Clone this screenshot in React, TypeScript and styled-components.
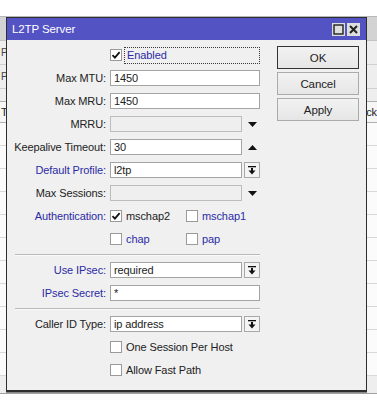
import React from 'react';
import styled, { createGlobalStyle } from 'styled-components';

const GlobalStyle = createGlobalStyle`
  html, body {
    margin: 0;
    padding: 0;
    background: #ffffff;
  }
  body {
    font-family: "Liberation Sans", Arial, sans-serif;
    font-size: 11px;
    letter-spacing: -0.1px;
    color: #222;
  }
`;

const Page = styled.div`
  position: relative;
  width: 377px;
  height: 403px;
  overflow: hidden;
  background: #fff;
  display: flex;
  flex-direction: column;
`;

const TopGap = styled.div`
  height: 16px;
  flex-shrink: 0;
`;

// window behind the dialog, only its edges are visible
const BackWindow = styled.div`
  height: 376px;
  flex-shrink: 0;
  background: #eeeeee;
  border-top: 1px solid #b8b8b8;
  border-bottom: 1px solid #a0a0a0;
  display: flex;
  flex-direction: column;
  overflow: hidden;
`;

const BackTitle = styled.div`
  height: 23px;
  background: #d3d3d3;
  border-bottom: 1px solid #c4c4c4;
`;

const BackToolbar = styled.div`
  height: 23px;
  border-bottom: 1px solid #cfcfcf;
  display: flex;
  align-items: center;
  justify-content: space-between;
  padding: 0 0 0 1px;
  color: #444;
  font-size: 10px;
`;

const BackSpacer = styled.div`
  height: 12px;
`;

const BackHeader = styled.div`
  height: 20px;
  background: #f6f6f6;
  border-top: 1px solid #b0b0b0;
  border-bottom: 1px solid #b0b0b0;
  display: flex;
  align-items: center;
  justify-content: space-between;
  padding: 0 0 0 1px;
  color: #222;
`;

const BackRow = styled.div`
  height: 22px;
  border-bottom: 1px solid #d8d8d8;
  background: #fbfbfb;
`;

const Dialog = styled.div`
  position: absolute;
  left: 6px;
  top: 17px;
  width: 359px;
  height: 372px;
  border: 1px solid #2e2e2e;
  border-bottom-width: 2px;
  background: #f0f0f0;
  display: flex;
  flex-direction: column;
  box-shadow: 0 1px 0 #8a8a8a;
`;

const TitleBar = styled.div`
  height: 22px;
  background: #5353c4;
  color: #fff;
  display: flex;
  align-items: center;
  padding: 0 6px 0 5px;
  font-size: 11.5px;
`;

const TitleText = styled.div`
  flex: 1;
`;

const TitleButton = styled.div`
  width: 13px;
  height: 13px;
  background: #dedede;
  margin-left: 2px;
  display: flex;
  align-items: center;
  justify-content: center;
`;

const Body = styled.div`
  display: flex;
  align-items: flex-start;
`;

const Form = styled.div`
  width: 253px;
  padding: 7px 0 0 1px;
  display: flex;
  flex-direction: column;
  gap: 7px;
`;

const Row = styled.div`
  display: grid;
  grid-template-columns: 98px 150px;
  column-gap: 4px;
  height: 16px;
  align-items: center;
`;

const Label = styled.div<{ $blue?: boolean }>`
  text-align: right;
  white-space: nowrap;
  color: ${p => (p.$blue ? '#2b2ba6' : '#222')};
`;

const Field = styled.div`
  display: flex;
  align-items: center;
  height: 16px;
`;

const Input = styled.div<{ $disabled?: boolean; $short?: boolean }>`
  box-sizing: border-box;
  width: ${p => (p.$short ? '132px' : '150px')};
  height: 16px;
  border: 1px solid ${p => (p.$disabled ? '#bdbdbd' : '#a4a4a4')};
  background: ${p => (p.$disabled ? '#efefef' : '#fff')};
  padding-left: 3px;
  line-height: 14px;
  white-space: nowrap;
`;

const ArrowSlot = styled.div`
  width: 16px;
  height: 16px;
  margin-left: 2px;
  display: flex;
  align-items: center;
  justify-content: center;
`;

const DropButton = styled.div`
  box-sizing: border-box;
  width: 16px;
  height: 16px;
  margin-left: 2px;
  border: 1px solid #a8a8a8;
  background: #f4f4f4;
  display: flex;
  align-items: center;
  justify-content: center;
`;

const Checks = styled.div`
  display: grid;
  grid-template-columns: 76px 74px;
  align-items: center;
`;

const Check = styled.div`
  display: flex;
  align-items: center;
  gap: 4px;
  white-space: nowrap;
`;

const Box = styled.div`
  box-sizing: border-box;
  width: 12px;
  height: 12px;
  border: 1px solid #9a9a9a;
  background: #fff;
  display: flex;
  align-items: center;
  justify-content: center;
`;

const CheckText = styled.span<{ $blue?: boolean }>`
  color: ${p => (p.$blue ? '#2b2ba6' : '#222')};
`;

const Focus = styled.div`
  box-sizing: border-box;
  height: 17px;
  flex: 1;
  margin-left: -2px;
  padding-left: 2px;
  border: 1px dotted #3a3a3a;
  line-height: 15px;
  color: #2b2ba6;
`;

const Separator = styled.div`
  height: 1px;
  margin: 0 0 0 7px;
  width: 245px;
  background: #b9b9b9;
  box-shadow: 0 1px 0 #fafafa;
`;

const Buttons = styled.div`
  margin-left: 16px;
  padding-top: 6px;
  display: flex;
  flex-direction: column;
  gap: 3px;
`;

const Button = styled.div<{ $default?: boolean }>`
  box-sizing: border-box;
  width: 82px;
  height: 23px;
  border: 1px solid ${p => (p.$default ? '#333' : '#ababab')};
  background: linear-gradient(#f2f2f2, #e6e6e6);
  display: flex;
  align-items: center;
  justify-content: center;
  font-size: 11.5px;
  color: #222;
`;

const Tick = () => (
  <svg width="10" height="10" viewBox="0 0 10 10">
    <path d="M1.5 5.2l2.4 2.4L8.6 2.2" fill="none" stroke="#111" strokeWidth="1.8" />
  </svg>
);

const Down = () => (
  <svg width="9" height="5" viewBox="0 0 9 5">
    <path d="M0 0h9L4.5 5z" fill="#111" />
  </svg>
);

const Up = () => (
  <svg width="9" height="5" viewBox="0 0 9 5">
    <path d="M0 5h9L4.5 0z" fill="#111" />
  </svg>
);

const DropIcon = () => (
  <svg width="8" height="9" viewBox="0 0 8 9">
    <rect x="0" y="0" width="8" height="1.3" fill="#111" />
    <rect x="3" y="2" width="2" height="3" fill="#111" />
    <path d="M0.5 4.5h7L4 8.5z" fill="#111" />
  </svg>
);

const CheckItem: React.FC<{ label: string; checked?: boolean; blue?: boolean }> = ({ label, checked, blue }) => (
  <Check>
    <Box>{checked && <Tick />}</Box>
    <CheckText $blue={blue}>{label}</CheckText>
  </Check>
);

const TextRow: React.FC<{ label: string; value?: string; blue?: boolean; disabled?: boolean; tail?: 'down' | 'up' | 'drop' }> = ({
  label,
  value,
  blue,
  disabled,
  tail,
}) => (
  <Row>
    <Label $blue={blue}>{label}:</Label>
    <Field>
      <Input $disabled={disabled} $short={!!tail}>{value}</Input>
      {tail === 'down' && (
        <ArrowSlot>
          <Down />
        </ArrowSlot>
      )}
      {tail === 'up' && (
        <ArrowSlot>
          <Up />
        </ArrowSlot>
      )}
      {tail === 'drop' && (
        <DropButton>
          <DropIcon />
        </DropButton>
      )}
    </Field>
  </Row>
);

export default function App() {
  return (
    <Page>
      <GlobalStyle />
      <TopGap />
      <BackWindow>
        <BackTitle />
        <BackToolbar>
          <span>P</span>
          <span />
        </BackToolbar>
        <BackToolbar>
          <span>P</span>
          <span />
        </BackToolbar>
        <BackSpacer />
        <BackHeader>
          <span>Tx</span>
          <span>ck</span>
        </BackHeader>
        {Array.from({ length: 11 }).map((_, i) => (
          <BackRow key={i} />
        ))}
      </BackWindow>

      <Dialog>
        <TitleBar>
          <TitleText>L2TP Server</TitleText>
          <TitleButton>
            <svg width="11" height="11" viewBox="0 0 11 11">
              <rect x="1" y="1" width="9" height="9" fill="none" stroke="#222" strokeWidth="1.4" />
            </svg>
          </TitleButton>
          <TitleButton>
            <svg width="11" height="11" viewBox="0 0 11 11">
              <path d="M2 2l7 7M9 2l-7 7" stroke="#222" strokeWidth="2" />
            </svg>
          </TitleButton>
        </TitleBar>
        <Body>
          <Form>
            <Row>
              <span />
              <Field>
                <Box>
                  <Tick />
                </Box>
                <span style={{ width: 4 }} />
                <Focus>Enabled</Focus>
              </Field>
            </Row>
            <TextRow label="Max MTU" value="1450" />
            <TextRow label="Max MRU" value="1450" />
            <TextRow label="MRRU" disabled tail="down" />
            <TextRow label="Keepalive Timeout" value="30" tail="up" />
            <TextRow label="Default Profile" value="l2tp" blue tail="drop" />
            <TextRow label="Max Sessions" disabled tail="down" />
            <Row>
              <Label $blue>Authentication:</Label>
              <Checks>
                <CheckItem label="mschap2" checked />
                <CheckItem label="mschap1" blue />
              </Checks>
            </Row>
            <Row>
              <span />
              <Checks>
                <CheckItem label="chap" blue />
                <CheckItem label="pap" blue />
              </Checks>
            </Row>
            <Separator />
            <TextRow label="Use IPsec" value="required" blue tail="drop" />
            <TextRow label="IPsec Secret" value="*" blue />
            <Separator />
            <TextRow label="Caller ID Type" value="ip address" tail="drop" />
            <Row>
              <span />
              <CheckItem label="One Session Per Host" />
            </Row>
            <Row>
              <span />
              <CheckItem label="Allow Fast Path" />
            </Row>
          </Form>
          <Buttons>
            <Button $default>OK</Button>
            <Button>Cancel</Button>
            <Button>Apply</Button>
          </Buttons>
        </Body>
      </Dialog>
    </Page>
  );
}
